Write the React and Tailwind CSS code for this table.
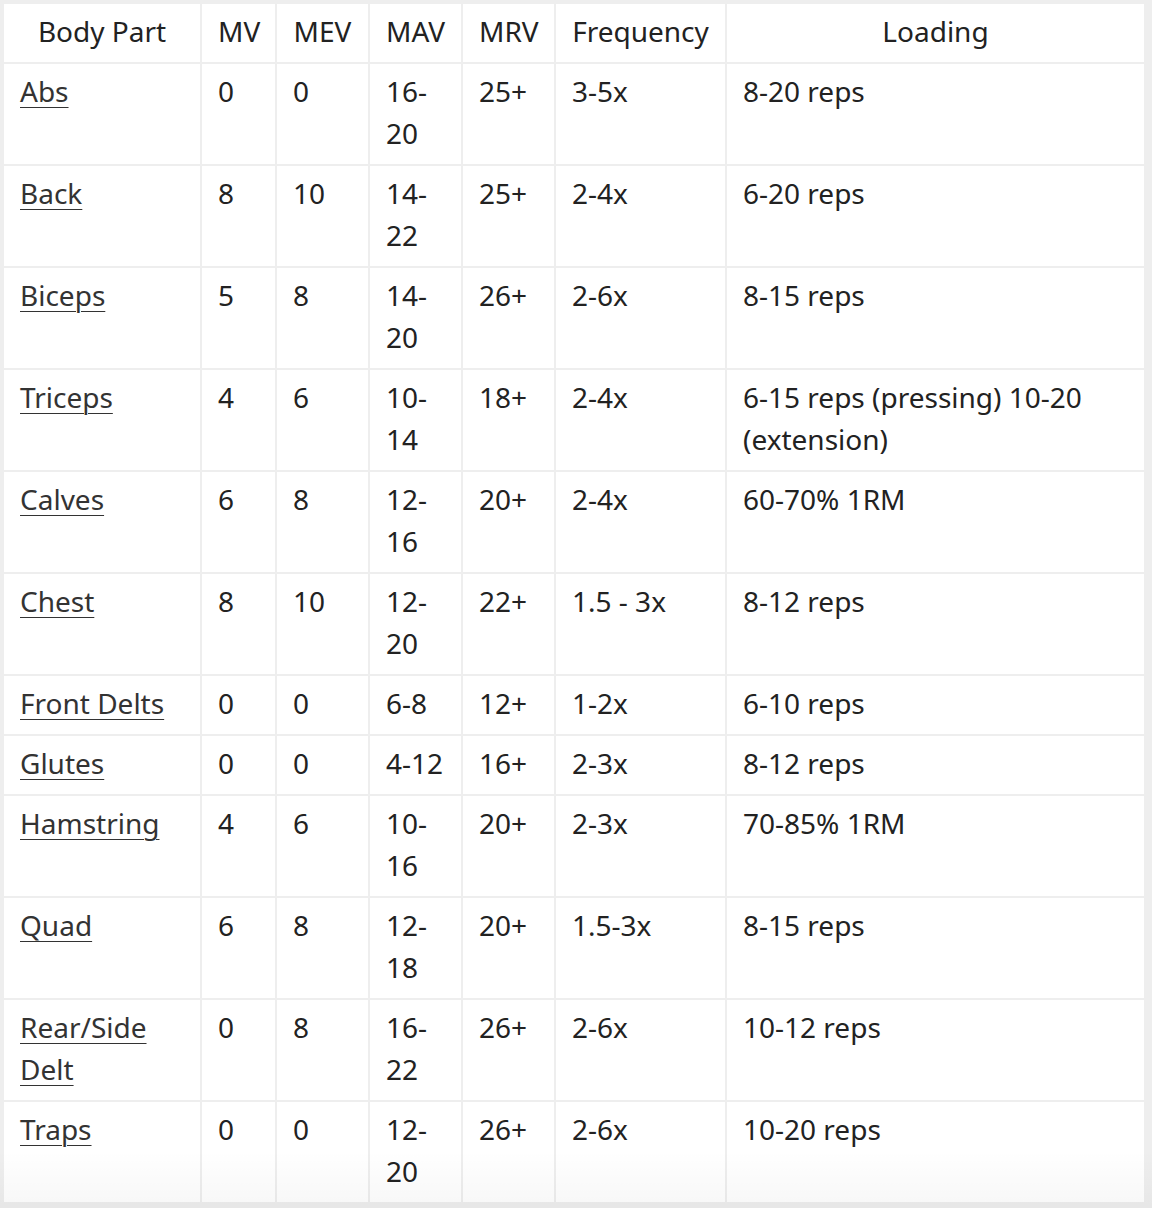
import React from "react";

const rows = [
  ["Abs", "0", "0", "16-20", "25+", "3-5x", "8-20 reps"],
  ["Back", "8", "10", "14-22", "25+", "2-4x", "6-20 reps"],
  ["Biceps", "5", "8", "14-20", "26+", "2-6x", "8-15 reps"],
  ["Triceps", "4", "6", "10-14", "18+", "2-4x", "6-15 reps (pressing) 10-20 (extension)"],
  ["Calves", "6", "8", "12-16", "20+", "2-4x", "60-70% 1RM"],
  ["Chest", "8", "10", "12-20", "22+", "1.5 - 3x", "8-12 reps"],
  ["Front Delts", "0", "0", "6-8", "12+", "1-2x", "6-10 reps"],
  ["Glutes", "0", "0", "4-12", "16+", "2-3x", "8-12 reps"],
  ["Hamstring", "4", "6", "10-16", "20+", "2-3x", "70-85% 1RM"],
  ["Quad", "6", "8", "12-18", "20+", "1.5-3x", "8-15 reps"],
  ["Rear/Side Delt", "0", "8", "16-22", "26+", "2-6x", "10-12 reps"],
  ["Traps", "0", "0", "12-20", "26+", "2-6x", "10-20 reps"],
];

const headers = ["Body Part", "MV", "MEV", "MAV", "MRV", "Frequency", "Loading"];

export default function App() {
  return (
    <div
      className="relative min-h-screen bg-[#eeeeee] pl-[2px] pt-[2px] text-[#222222]"
      style={{ fontFamily: '"Noto Sans", "Open Sans", sans-serif' }}
    >
      <table className="table-fixed border-separate border-spacing-[2px] w-[1144px] text-[28px] leading-[42px]">
        <colgroup>
          <col className="w-[196px]" />
          <col className="w-[73px]" />
          <col className="w-[91px]" />
          <col className="w-[91px]" />
          <col className="w-[91px]" />
          <col className="w-[169px]" />
          <col className="w-[417px]" />
        </colgroup>
        <thead>
          <tr>
            {headers.map((h) => (
              <th key={h} className="bg-white px-4 pt-[6px] pb-[10px] text-center font-normal align-top">
                {h}
              </th>
            ))}
          </tr>
        </thead>
        <tbody>
          {rows.map((r) => (
            <tr key={r[0]}>
              {r.map((c, i) => (
                <td key={i} className="bg-white px-4 pt-[6px] pb-[10px] text-left align-top">
                  {i === 0 ? (
                    <a className="text-[#333333] underline decoration-1 underline-offset-[5px]">{c}</a>
                  ) : (
                    c
                  )}
                </td>
              ))}
            </tr>
          ))}
        </tbody>
      </table>
      <div className="pointer-events-none absolute left-0 right-0 top-[1150px] h-[58px] bg-gradient-to-b from-transparent to-[rgba(0,0,0,0.03)]" />
    </div>
  );
}
